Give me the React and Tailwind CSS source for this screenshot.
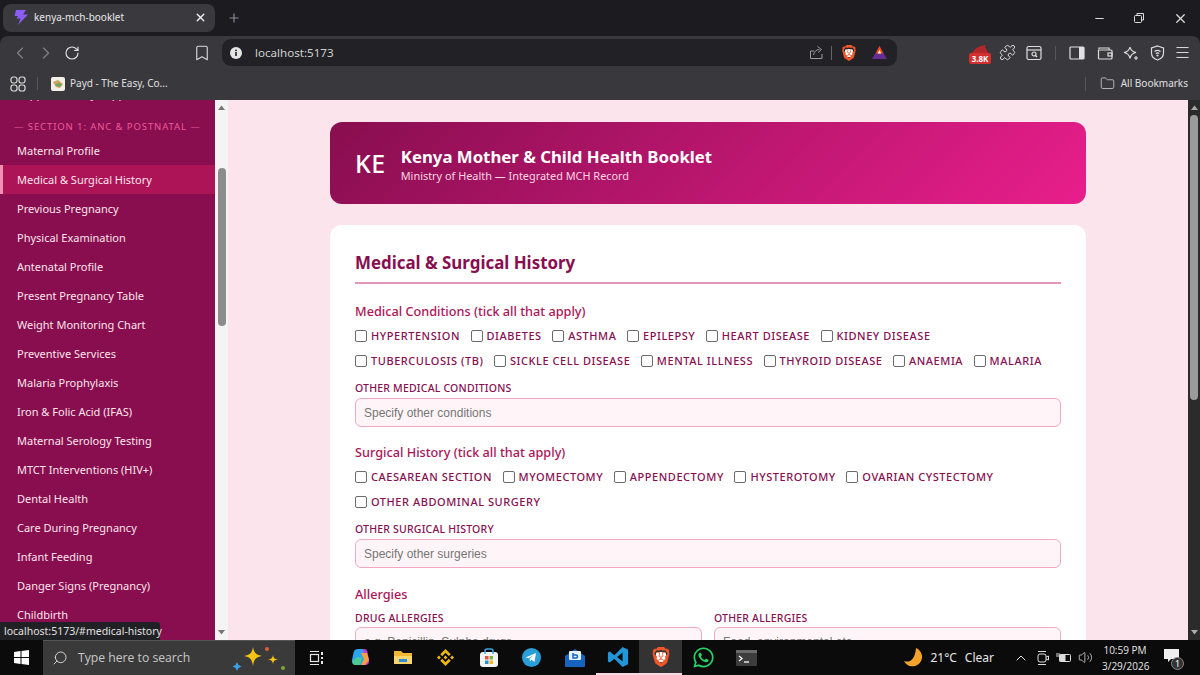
import React from "react";
import { ChevronLeft, ChevronRight, RotateCw, Bookmark, Puzzle, X, Plus, Minus, Folder, Search, ChevronUp, Volume2, Menu } from "lucide-react";
import { FaWhatsapp } from "react-icons/fa";
import { SiBrave } from "react-icons/si";

const ui = { fontFamily: '"Noto Sans", "Open Sans", sans-serif' };

const nav = ["Maternal Profile","Medical & Surgical History","Previous Pregnancy","Physical Examination","Antenatal Profile","Present Pregnancy Table","Weight Monitoring Chart","Preventive Services","Malaria Prophylaxis","Iron & Folic Acid (IFAS)","Maternal Serology Testing","MTCT Interventions (HIV+)","Dental Health","Care During Pregnancy","Infant Feeding","Danger Signs (Pregnancy)","Childbirth"];

function Check({ label }) {
  return (
    <label className="flex items-center gap-[4px] text-[11px] leading-[16px] font-medium tracking-[0.55px] uppercase text-[#880e4f] whitespace-nowrap">
      <input type="checkbox" className="appearance-none w-[12px] h-[12px] border border-[#6b6b6b] rounded-[2px] bg-white shrink-0" />
      {label}
    </label>
  );
}

function Checks({ rows }) {
  return (
    <div className="flex flex-col gap-[9px]">
      {rows.map((r, i) => (
        <div key={i} className="flex gap-[10.5px]">{r.map((l) => <Check key={l} label={l} />)}</div>
      ))}
    </div>
  );
}

function Field({ label, placeholder, tight }) {
  return (
    <div className="flex-1 min-w-0">
      <div className={`text-[10.5px] leading-[14px] font-medium tracking-[0.2px] uppercase text-[#880e4f] ${tight ? "mb-[2px]" : "mb-[3px]"}`}>{label}</div>
      <input readOnly placeholder={placeholder} className="w-full h-[29px] border-[1.5px] border-[#f4a6c4] rounded-[6px] bg-[#fff5f9] px-[8px] text-[12px] text-[#555] placeholder:text-[#757575] outline-none" style={{ fontFamily: '"Liberation Sans", sans-serif' }} />
    </div>
  );
}

const Heading = ({ children, className = "" }) => (
  <h3 className={`text-[12.7px] leading-[18px] font-medium text-[#ad1457] ${className}`}>{children}</h3>
);

function BraveIcon({ size, inner }) {
  return (
    <span className="relative inline-flex items-center justify-center">
      <span className="absolute bg-white rounded-[2px]" style={{ width: inner, height: inner }} />
      <SiBrave size={size} color="#f0562a" className="relative" />
    </span>
  );
}

function BrowserBar() {
  return (
    <div className="shrink-0 bg-[#1c1b20] h-[100px] flex flex-col" style={ui}>
      <div className="h-[36px] flex items-center pl-[3px]">
        <div className="w-[212px] h-[28px] bg-[#39393e] rounded-[8px] flex items-center pl-[10px] pr-[8px] gap-[5px] text-[#e8e8e8] text-[10px] mt-[-1px]">
          <svg width="16" height="17" viewBox="0 0 16 17"><path d="M3 1h10L10 5.500h5L5 16l2.500-6.500H3.500L5 7H1.500z" fill="#8b5cf6" /></svg>
          <span className="flex-1">kenya-mch-booklet</span>
          <X size={13} strokeWidth={2.5} color="#f0f0f0" />
        </div>
        <Plus size={14} color="#8a8a90" className="ml-[12px]" />
        <div className="flex-1" />
        <Minus size={13} color="#ddd" className="mr-[27px]" />
        <svg width="12" height="12" viewBox="0 0 12 12" fill="none" stroke="#ddd" className="mr-[28px]"><rect x="1.5" y="3.5" width="7" height="7" rx="1" /><path d="M4 3V1.5h6.5V8H9" /></svg>
        <X size={15} color="#ddd" className="mr-[12px]" />
      </div>
      <div className="flex-1 bg-[#38383d] rounded-t-[8px] flex flex-col">
        <div className="h-[31px] flex items-center pt-[2px]">
          <ChevronLeft size={20} strokeWidth={1.3} color="#85858a" className="ml-[10px]" />
          <ChevronRight size={20} strokeWidth={1.3} color="#85858a" className="ml-[6px]" />
          <RotateCw size={16} strokeWidth={1.7} color="#e2e2e2" className="ml-[8px]" />
          <Bookmark size={18} strokeWidth={1.5} color="#d8d8d8" className="ml-[113px]" />
          <div className="ml-[11px] w-[675px] h-[27px] bg-[#222226] rounded-[9px] flex items-center pl-[8px] pr-[9px]">
            <svg width="12" height="12" viewBox="0 0 12 12"><circle cx="6" cy="6" r="6" fill="#e5e5e5" /><rect x="5.2" y="5" width="1.6" height="4" fill="#222" /><rect x="5.2" y="2.6" width="1.6" height="1.6" fill="#222" /></svg>
            <span className="ml-[13px] text-[11.6px] text-[#d0d0d0]">localhost:5173</span>
            <div className="flex-1" />
            <svg width="15" height="15" viewBox="0 0 15 15" fill="none" stroke="#9a9a9f" strokeWidth="1"><path d="M13 9v4.5H1.5V6H5" /><path d="M4.5 10c.6-3.5 3-5.500 6-5.500M8.500 1.500l4 3-3.500 3" /></svg>
            <div className="w-px h-[14px] bg-[#66666a] ml-[7px] mr-[9px]" />
            <BraveIcon size={16} inner={8} />
            <svg width="17" height="15" viewBox="0 0 17 15" className="ml-[14px]"><path d="M8.500 1L16 14H1z" fill="#662d91" /><path d="M8.500 1l3.600 7.500H4.900z" fill="#ff5000" /><path d="M8.500 5l1.700 3.500H6.800z" fill="#fff" /></svg>
          </div>
          <div className="relative ml-[72px] w-[22px] h-[20px] mt-[3px]">
            <svg width="22" height="10" viewBox="0 0 22 10" className="absolute top-0 left-0"><path d="M3 10c1-4 5-8 14-9l-1 2 4 7z" fill="#b3262c" /></svg>
            <span className="absolute bottom-0 left-0 w-[22px] h-[11px] rounded-[2px] bg-[#d32f2f] text-white text-[8px] leading-[11px] font-bold text-center">3.8K</span>
          </div>
          <Puzzle size={17} strokeWidth={1.4} color="#dedede" className="ml-[8px]" />
          <svg width="16" height="16" viewBox="0 0 16 16" fill="none" stroke="#dedede" strokeWidth="1.2" className="ml-[10px]"><rect x="1" y="1.500" width="14" height="13" rx="1.500" /><path d="M1 5h14" /><circle cx="8" cy="9" r="2" /><path d="M9.500 10.500l1.500 1.500" /></svg>
          <div className="w-px h-[14px] bg-[#55555a] ml-[13px] mr-[13px]" />
          <svg width="16" height="14" viewBox="0 0 16 14"><rect x="1" y="1" width="14" height="12" rx="1" fill="none" stroke="#e0e0e0" strokeWidth="1.2" /><rect x="10" y="1" width="5" height="12" fill="#e0e0e0" /></svg>
          <svg width="16" height="14" viewBox="0 0 16 14" fill="none" stroke="#dedede" strokeWidth="1.2" className="ml-[12px]"><path d="M2 3V2h10v2M1.500 3.500V12a1 1 0 0 0 1 1H14a1 1 0 0 0 1-1V5a1 1 0 0 0-1-1H2a.6.6 0 0 1-.5-.5z" /><rect x="11" y="7" width="4" height="3" /></svg>
          <svg width="16" height="16" viewBox="0 0 16 16" fill="none" stroke="#dedede" strokeWidth="1.2" className="ml-[10px]"><path d="M7 2c.6 3 2.400 4.800 6 5.500-3.600.7-5.400 2.500-6 6-.6-3.500-2.400-5.300-6-6 3.600-.7 5.400-2.500 6-5.500z" /><path d="M13 11v4M11 13h4" /></svg>
          <svg width="15" height="16" viewBox="0 0 15 16" fill="none" stroke="#dedede" strokeWidth="1.200" className="ml-[11px]"><path d="M7.500 1l6 2v5c0 3.500-3 6-6 7-3-1-6-3.500-6-7V3z" /><path d="M4.500 6.500c2-1.500 4-1.500 6 0M5.800 8.500c1-.8 2.400-.8 3.400 0" /><circle cx="7.500" cy="10.500" r=".5" /></svg>
          <Menu size={17} strokeWidth={1.4} color="#dedede" className="ml-[9px]" />
        </div>
        <div className="h-[33px] flex items-center text-[#e0e0e0] text-[10px]">
          <svg width="16" height="16" viewBox="0 0 16 16" fill="none" stroke="#dcdcdc" strokeWidth="1.200" className="ml-[10px]"><rect x="1" y="1" width="6" height="6" rx="2.200" /><rect x="9" y="1" width="6" height="6" rx="2.200" /><rect x="1" y="9" width="6" height="6" rx="2.200" /><rect x="9" y="9" width="6" height="6" rx="2.200" /></svg>
          <div className="w-px h-[13px] bg-[#55555a] ml-[11px] mr-[13px]" />
          <svg width="14" height="14" viewBox="0 0 14 14"><rect width="14" height="14" rx="2" fill="#f2f0e6" /><path d="M2 5l5-2 5 4-3 4-4-1z" fill="#c9a35a" /><path d="M4 8l4-2 3 2-3 2z" fill="#6aa56a" /></svg>
          <span className="ml-[5px]">Payd - The Easy, Co...</span>
          <div className="flex-1" />
          <div className="w-px h-[14px] bg-[#55555a] mr-[14px]" />
          <Folder size={15} strokeWidth={1.200} color="#dcdcdc" />
          <span className="ml-[6px] mr-[12px]">All Bookmarks</span>
        </div>
      </div>
    </div>
  );
}

function Sidebar() {
  return (
    <aside className="w-[215px] shrink-0 bg-[#880e4f] overflow-hidden relative" style={ui}>
      <div className="mt-[-14px] h-[16px] pl-[17px] text-[11px] leading-[16px] text-[#fce4ec]">Supplementary Support</div>
      <div className="mt-[18px] h-[14px] pl-[14px] text-[9.500px] leading-[14px] tracking-[0.9px] text-[#ec5a9a] whitespace-nowrap">— SECTION 1: ANC &amp; POSTNATAL —</div>
      <div className="mt-[2px]">
        {nav.map((n, i) => (
          <div key={n} className={`h-[29px] pt-[2px] flex items-center text-[11px] text-[#fce4ec] whitespace-nowrap ${i === 1 ? "bg-[#ad1457] border-l-[3px] border-[#f48fb1] pl-[14px]" : "pl-[17px]"}`}>{n}</div>
        ))}
      </div>
      <div className="absolute left-0 bottom-0 h-[18px] w-[160px] bg-[#202124] text-[#e0e0e0] text-[10.500px] leading-[18px] pl-[4px] rounded-tr-[3px] whitespace-nowrap">localhost:5173/#medical-history</div>
    </aside>
  );
}

const ScrollBar = ({ light, thumbTop, thumbH, bg, thumb, arrow }) => (
  <div className={`shrink-0 flex flex-col items-center ${bg} ${light ? "w-[13px]" : "w-[12px]"}`}>
    <svg width="9" height="7" viewBox="0 0 9 7" className="mt-[4px] shrink-0"><path d="M4.500 1.500L8 6H1z" fill={arrow} /></svg>
    <div className="rounded-full w-[8px]" style={{ marginTop: thumbTop, height: thumbH, background: thumb }} />
    <div className="flex-1" />
    <svg width="9" height="7" viewBox="0 0 9 7" className="mb-[4px] shrink-0"><path d="M4.500 5.500L8 1H1z" fill={arrow} /></svg>
  </div>
);

function Main() {
  return (
    <main className="flex-1 min-w-0 bg-[#fce4ec] overflow-hidden flex flex-col items-center pt-[22px]" style={ui}>
      <header className="w-[756px] h-[82px] shrink-0 rounded-[12px] flex items-center pl-[25px] bg-[linear-gradient(135deg,#880e4f,#e91e8c)]">
        <span className="text-[25px] font-medium text-white tracking-[0.5px] leading-none">KE</span>
        <div className="ml-[15px] mt-[3px]">
          <div className="text-[16.8px] leading-[21px] mb-[1px] font-bold text-white">Kenya Mother &amp; Child Health Booklet</div>
          <div className="text-[10.9px] leading-[15px] text-[#fbd5e5]">Ministry of Health — Integrated MCH Record</div>
        </div>
      </header>
      <section className="w-[756px] mt-[21px] shrink-0 bg-white rounded-[12px] px-[25px] pt-[24px] pb-[24px]">
        <h2 className="text-[16.9px] leading-[28px] font-bold text-[#880e4f] pb-[5px] border-b-2 border-[#e396b8]">Medical &amp; Surgical History</h2>
        <Heading className="mt-[18px] mb-[8px]">Medical Conditions (tick all that apply)</Heading>
        <Checks rows={[["Hypertension","Diabetes","Asthma","Epilepsy","Heart Disease","Kidney Disease"],["Tuberculosis (TB)","Sickle Cell Disease","Mental Illness","Thyroid Disease","Anaemia","Malaria"]]} />
        <div className="mt-[12px]"><Field label="Other Medical Conditions" placeholder="Specify other conditions" /></div>
        <Heading className="mt-[16px] mb-[8px]">Surgical History (tick all that apply)</Heading>
        <Checks rows={[["Caesarean Section","Myomectomy","Appendectomy","Hysterotomy","Ovarian Cystectomy"],["Other Abdominal Surgery"]]} />
        <div className="mt-[12px]"><Field label="Other Surgical History" placeholder="Specify other surgeries" /></div>
        <Heading className="mt-[17px] mb-[8px]">Allergies</Heading>
        <div className="flex gap-[12px]">
          <Field tight label="Drug Allergies" placeholder="e.g. Penicillin, Sulpha drugs" />
          <Field tight label="Other Allergies" placeholder="Food, environmental etc." />
        </div>
      </section>
    </main>
  );
}

function Taskbar() {
  const Cell = ({ children, active, line }) => <div className={`w-[43px] h-full flex items-center justify-center shrink-0 ${active ? "bg-[#333]" : ""} ${line ? "border-b-2 border-[#f7d7e2]" : ""}`}>{children}</div>;
  return (
    <div className="shrink-0 h-[35px] bg-[#0b0b0b] flex items-center text-[#e6e6e6]" style={ui}>
      <div className="w-[43px] h-full flex items-center justify-center">
        <svg width="15" height="15" viewBox="0 0 15 15" fill="#fff"><path d="M0 2l6.500-1v6H0zM7.500.9L15 0v7H7.500zM0 8h6.500v6L0 13zM7.500 8H15v7l-7.500-1z" /></svg>
      </div>
      <div className="w-[252px] h-full bg-[#3a3a3a] flex items-center pl-[9px] relative border-t border-[#555]">
        <Search size={16} strokeWidth={1.400} color="#ddd" className="scale-x-[-1]" />
        <span className="ml-[10px] text-[12.2px] text-[#c8c8c8]" style={{ fontFamily: '"Open Sans", sans-serif' }}>Type here to search</span>
        <svg width="56" height="28" viewBox="0 0 56 28" className="absolute left-[188px] top-[3px]">
          <path d="M22 3c1 6 3 8 9 9-6 1-8 3-9 10-1-7-3-9-9-10 6-1 8-3 9-9z" fill="#f9c513" />
          <path d="M42 11c.5 3 1.500 4 5 4.500-3.500.5-4.500 1.500-5 4.500-.5-3-1.500-4-5-4.500 3.500-.5 4.500-1.500 5-4.500z" fill="#f9c513" />
          <path d="M6 18l1.500 3 3 1.500-3 1.500-1.500 3-1.500-3-3-1.500 3-1.500z" fill="#3aa0e8" />
          <circle cx="36" cy="5" r="2" fill="#d9603a" /><circle cx="52" cy="24" r="2" fill="#7ea63c" />
        </svg>
      </div>
      <Cell>
        <svg width="16" height="16" viewBox="0 0 16 16" fill="none" stroke="#e6e6e6" strokeWidth="1.200"><path d="M1 1.500h9M1 14.500h9" /><rect x="1.500" y="4.500" width="8" height="7" /><path d="M13 2v3M13 7v2M13 11v3" strokeWidth="2" /></svg>
      </Cell>
      <Cell>
        <svg width="22" height="20" viewBox="0 0 22 20" className="ml-[3px]"><path d="M8 1h6c2 0 3 1 3.500 3L19 12c.5 3-1 5-4 5h-3z" fill="#c13dd8" /><path d="M13 1H8C5 1 4 3 3.500 5L2 12c-.5 3 1 5 4 5h5c2 0 3-1 3.500-3z" fill="#2aa5f0" /><path d="M11 5h6l2 7-4 5h-4l3-6z" fill="#f9a03f" /><path d="M3 12l5-3 4 1-2 7H6c-3 0-4-2-3-5z" fill="#4ec98f" /></svg>
      </Cell>
      <Cell>
        <svg width="20" height="17" viewBox="0 0 20 17"><path d="M1 2h7l2 2h9v11H1z" fill="#f2b632" /><path d="M1 7h18v8H1z" fill="#fbd46b" /><rect x="6" y="10" width="8" height="3" fill="#2a8fd8" /></svg>
      </Cell>
      <Cell>
        <svg width="17" height="17" viewBox="0 0 24 24" fill="#f0b90b"><path d="M16.624 13.9202l2.7175 2.7154-7.353 7.353-7.353-7.352 2.7175-2.7164 4.6355 4.6595 4.6356-4.6595zm4.6366-4.6366L24 12l-2.7154 2.7164L18.5682 12l2.6924-2.7164zm-9.272.001l2.7163 2.6914-2.7164 2.7174v-.001L9.2721 12l2.7164-2.7154zm-9.2722-.001L5.4088 12l-2.6914 2.6924L0 12l2.7164-2.7164zM11.9885.0115l7.353 7.329-2.7174 2.7154-4.6356-4.6356-4.6355 4.6595-2.7174-2.7154 7.353-7.353z" /></svg>
      </Cell>
      <Cell>
        <svg width="20" height="20" viewBox="0 0 20 20"><rect x="1" y="4" width="18" height="15" rx="3" fill="#f4f4f4" /><path d="M6 6V3a2 2 0 0 1 2-2h4a2 2 0 0 1 2 2v3" fill="none" stroke="#3aa7e0" strokeWidth="1.500" /><rect x="6" y="8" width="3.500" height="3.500" fill="#e8533f" /><rect x="10.500" y="8" width="3.500" height="3.500" fill="#7cb342" /><rect x="6" y="12.500" width="3.500" height="3.500" fill="#2a8fd8" /><rect x="10.500" y="12.500" width="3.500" height="3.500" fill="#f9b81e" /></svg>
      </Cell>
      <Cell>
        <svg width="19" height="19" viewBox="0 0 19 19"><circle cx="9.500" cy="9.500" r="9.500" fill="#2a9ed8" /><path d="M3.500 9.500L14 5l-1.500 9-3-2.200-1.500 1.500-.4-2.600 4.400-3.700-5.500 3.200z" fill="#fff" /></svg>
      </Cell>
      <Cell>
        <svg width="22" height="19" viewBox="0 0 22 19"><path d="M1 8l10-7 10 7v10a1 1 0 0 1-1 1H2a1 1 0 0 1-1-1z" fill="#1565c0" /><rect x="5" y="3" width="12" height="9" rx="1" fill="#e8f0fb" /><path d="M9 5v5h3a1.500 1.500 0 0 0 0-3H9" fill="none" stroke="#1565c0" strokeWidth="1.500" /></svg>
      </Cell>
      <Cell line>
        <svg width="22" height="22" viewBox="0 0 24 24"><path d="M17 1l6 3v16l-6 3-9-9-5 4-2-1V7l2-1 5 4z" fill="#2196d8" /><path d="M17 7l-6 5 6 5z" fill="#0b0b0b" /></svg>
      </Cell>
      <Cell active line>
        <BraveIcon size={20} inner={10} />
      </Cell>
      <Cell>
        <FaWhatsapp size={23} color="#25d366" />
      </Cell>
      <Cell>
        <svg width="21" height="16" viewBox="0 0 21 16"><rect width="21" height="16" rx="1" fill="#3d3d3d" /><rect width="21" height="3" fill="#6a6a6a" /><path d="M3 6l3 2.500L3 11" fill="none" stroke="#fff" strokeWidth="1.300" /><path d="M8 12h5" stroke="#fff" strokeWidth="1.300" /></svg>
      </Cell>
      <div className="flex-1" />
      <svg width="21" height="21" viewBox="0 0 21 21"><path d="M13 1a9.500 9.500 0 1 1-12 13c5 2 11-.5 12-13z" fill="#f4a32a" /></svg>
      <span className="ml-[6px] text-[12px]">21°C</span>
      <span className="ml-[8px] text-[12px]">Clear</span>
      <ChevronUp size={16} strokeWidth={1.500} className="ml-[19px]" />
      <svg width="13" height="16" viewBox="0 0 13 16" fill="none" stroke="#ddd" className="ml-[7px]"><rect x="2" y="4" width="8" height="8" rx="2" /><path d="M2 1.500h8M2 14.500h8M10 7l2.500-1v4L10 9" /></svg>
      <svg width="15" height="11" viewBox="0 0 15 11" fill="none" stroke="#ddd" className="ml-[7px]"><rect x="3.500" y="2.500" width="11" height="7" rx="1" /><rect x="4" y="3" width="5" height="6" fill="#ddd" /><path d="M1 1v4M3 1v4" /></svg>
      <Volume2 size={15} strokeWidth={1.200} className="ml-[7px]" />
      <div className="ml-[9px] w-[46px] text-center text-[10px] leading-[16px] text-[#e6e6e6]" style={{ fontFamily: '"Open Sans", sans-serif' }}>
        <div>10:59 PM</div>
        <div>3/29/2026</div>
      </div>
      <div className="relative ml-[16px] mr-[19px] w-[17px] h-[20px]">
        <svg width="15" height="14" viewBox="0 0 15 14" className="absolute top-[1px] left-0" fill="#eee"><path d="M0 0h15v10H7l-3 3v-3H0z" /></svg>
        <span className="absolute right-[-3px] bottom-[-2px] w-[13px] h-[13px] rounded-full bg-[#333] border border-[#888] text-[9px] leading-[11px] text-center text-white">1</span>
      </div>
    </div>
  );
}

export default function App() {
  return (
    <div className="w-[1200px] h-[675px] overflow-hidden flex flex-col">
      <BrowserBar />
      <div className="flex-1 min-h-0 flex">
        <Sidebar />
        <ScrollBar light bg="bg-[#f4f4f4]" thumbTop="57px" thumbH="158px" thumb="#8c8c8c" arrow="#777" />
        <Main />
        <ScrollBar bg="bg-[#2b2b2b]" thumbTop="4px" thumbH="285px" thumb="#9b9b9b" arrow="#aaa" />
      </div>
      <Taskbar />
    </div>
  );
}
